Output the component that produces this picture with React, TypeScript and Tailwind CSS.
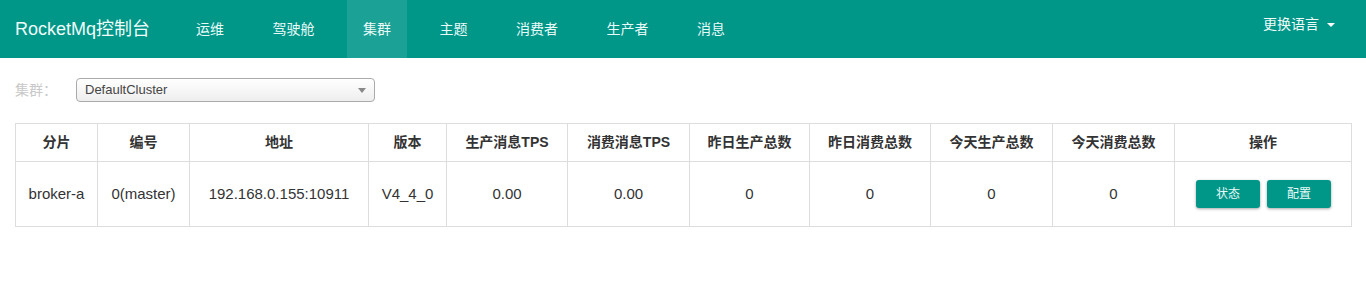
const navItems = ['运维', '驾驶舱', '集群', '主题', '消费者', '生产者', '消息']

const columns = [
  { title: '分片', width: 82 },
  { title: '编号', width: 92 },
  { title: '地址', width: 179 },
  { title: '版本', width: 78 },
  { title: '生产消息TPS', width: 121 },
  { title: '消费消息TPS', width: 122 },
  { title: '昨日生产总数', width: 120 },
  { title: '昨日消费总数', width: 121 },
  { title: '今天生产总数', width: 122 },
  { title: '今天消费总数', width: 122 },
  { title: '操作', width: 177 },
]

const row = ['broker-a', '0(master)', '192.168.0.155:10911', 'V4_4_0', '0.00', '0.00', '0', '0', '0', '0']

const font = { fontFamily: '"Liberation Sans", Arial, "Noto Sans CJK SC", sans-serif' }

export default function App() {
  return (
    <div className="min-h-[284px] bg-white text-[#333]" style={font}>
      <nav className="flex h-[58px] items-stretch bg-[#009688] text-white">
        <div className="flex items-center pl-[15px] pr-[30px] text-[18px] text-[#f0fbfa]">RocketMq控制台</div>
        <ul className="flex items-stretch gap-[16.5px]">
          {navItems.map((item) => (
            <li
              key={item}
              className={
                'flex items-center px-4 pt-[1px] text-[14px] text-[#eafaf8] ' +
                (item === '集群' ? 'bg-[#1ba195]' : '')
              }
            >
              {item}
            </li>
          ))}
        </ul>
        <div className="ml-auto flex items-center gap-[8px] pr-[31px] pb-[9px] text-[14px] text-[#f0fbfa]">
          更换语言
          <span className="h-0 w-0 border-x-[4px] border-t-[4px] border-x-transparent border-t-white" />
        </div>
      </nav>

      <div className="px-[15px]">
        <div className="flex items-center pt-[20px]">
          <span className="w-[61px] text-[14px] text-[#c8c8c8]">集群：</span>
          <div className="flex h-[24px] w-[299px] items-center justify-between rounded-[4px] border border-[#aaa] bg-gradient-to-b from-white to-[#eeeeee] pl-[8px] pr-[8px] text-[13px] text-[#444]">
            <span>DefaultCluster</span>
            <span className="h-0 w-0 border-x-[4px] border-t-[5px] border-x-transparent border-t-[#888]" />
          </div>
        </div>

        <table className="mt-[21px] w-[1336px] table-fixed border-collapse border border-[#ddd]">
          <colgroup>
            {columns.map((c) => (
              <col key={c.title} style={{ width: c.width }} />
            ))}
          </colgroup>
          <thead>
            <tr className="h-[38px]">
              {columns.map((c) => (
                <th key={c.title} className="border border-[#ddd] text-center text-[14px] font-bold text-[#333]">
                  {c.title}
                </th>
              ))}
            </tr>
          </thead>
          <tbody>
            <tr className="h-[65px]">
              {row.map((v, i) => (
                <td key={i} className="border border-[#ddd] text-center text-[15px] text-[#333]">
                  {v}
                </td>
              ))}
              <td className="border border-[#ddd]">
                <div className="flex justify-center gap-[7px] pl-[1px]">
                  <button className="h-[28px] w-[64px] rounded-[3px] bg-[#009688] text-[12px] text-[#eafaf8] shadow-[0_1px_3px_rgba(0,0,0,0.35)]">
                    状态
                  </button>
                  <button className="h-[28px] w-[64px] rounded-[3px] bg-[#009688] text-[12px] text-[#eafaf8] shadow-[0_1px_3px_rgba(0,0,0,0.35)]">
                    配置
                  </button>
                </div>
              </td>
            </tr>
          </tbody>
        </table>
      </div>
    </div>
  )
}
